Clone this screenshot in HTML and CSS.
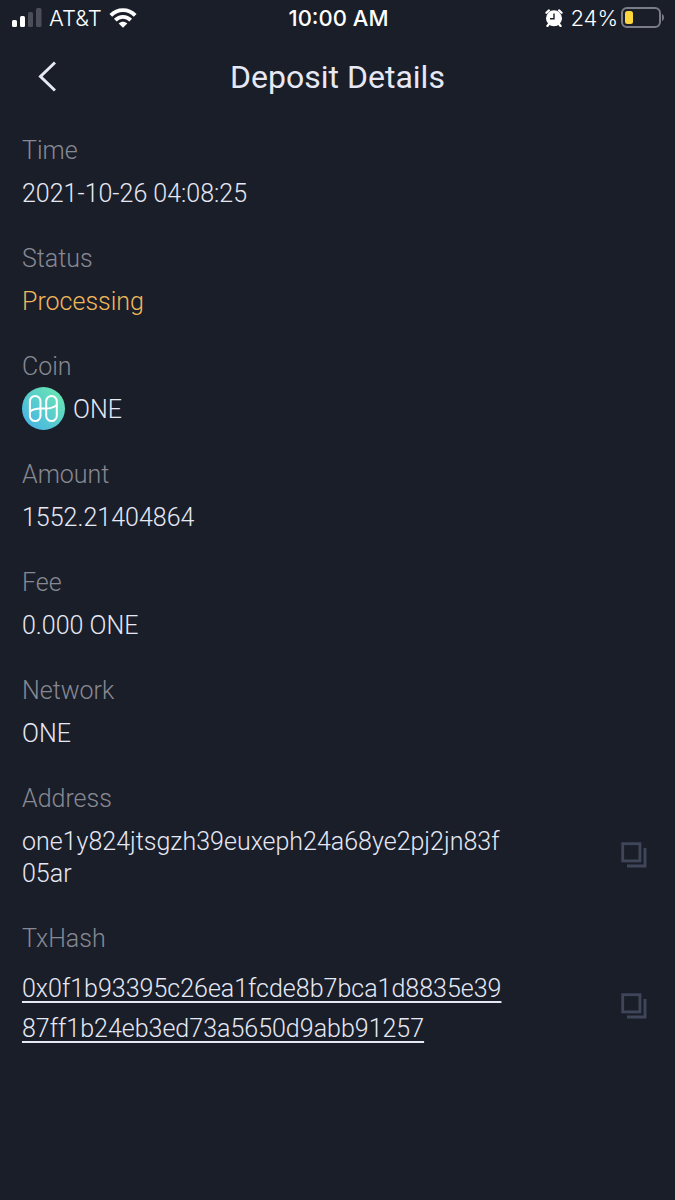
FILE: index.html
```html
<!DOCTYPE html>
<html lang="en">
<head>
    <meta charset="UTF-8">
    <meta name="viewport" content="width=device-width, initial-scale=1.0">
    <title>Deposit Details</title>
    <link rel="stylesheet" href="styles.css">
</head>
<body>
    <!-- Phone status bar -->
    <div class="status-bar">
        <div class="status-left">
            <svg class="signal" width="30" height="20" viewBox="0 0 30 20" fill="#ffffff">
                <rect x="0" y="12" width="5" height="7" rx="1.5"/>
                <rect x="8" y="8" width="5" height="11" rx="1.5"/>
                <rect x="16" y="4" width="5" height="15" rx="1.5" fill="#4b4d57"/>
                <rect x="24" y="0" width="5.5" height="19" rx="1.5" fill="#4b4d57"/>
            </svg>
            <span>AT&amp;T</span>
            <svg class="wifi" width="28" height="20" viewBox="0 0 28 20" fill="none" stroke="#ffffff" stroke-width="3.8">
                <path d="M1.8 7.4C8.6 0.4 19.4 0.4 26.2 7.4"/>
                <path d="M6.3 12.1C10.6 7.8 17.4 7.8 21.7 12.1"/>
                <path d="M14 19.8L9.7 15.5C12.2 13.1 15.8 13.1 18.3 15.5Z" fill="#ffffff" stroke="none"/>
            </svg>
        </div>
        <span class="clock">10:00 AM</span>
        <div class="status-right">
            <svg class="alarm" width="18" height="18" viewBox="0 0 18 18">
                <circle cx="9" cy="9.3" r="8" fill="#ffffff"/>
                <path d="M1.4 3.8L4 1.4M16.6 3.8L14 1.4M4 15L2.4 17M14 15L15.6 17" stroke="#ffffff" stroke-width="2.2" stroke-linecap="round"/>
                <path d="M9 4.6V9.7H5" fill="none" stroke="#1a1e29" stroke-width="1.4"/>
            </svg>
            <span>24%</span>
            <svg class="battery" width="44" height="22" viewBox="0 0 44 22">
                <rect x="1" y="1" width="38" height="19" rx="5" fill="none" stroke="#7b7d86" stroke-width="2"/>
                <rect x="4" y="4" width="8" height="13" rx="2.5" fill="#fdd63c"/>
                <path d="M41 7C43.6 7.6 43.6 13.4 41 14Z" fill="#7b7d86"/>
            </svg>
        </div>
    </div>

    <header class="title-bar">
        <button class="back-btn" type="button" aria-label="Back">
            <svg width="20" height="32" viewBox="0 0 20 32" fill="none" stroke="#e6e8f5" stroke-width="3">
                <path d="M19 1.5L4.5 15.5L19 29.5"/>
            </svg>
        </button>
        <h1>Deposit Details</h1>
    </header>

    <main>
        <dl class="details">
            <div class="field">
                <dt>Time</dt>
                <dd>2021-10-26 04:08:25</dd>
            </div>
            <div class="field">
                <dt>Status</dt>
                <dd class="processing">Processing</dd>
            </div>
            <div class="field">
                <dt>Coin</dt>
                <dd class="coin">
                    <svg width="44" height="46" viewBox="0 0 44 46">
                        <defs>
                            <linearGradient id="coin-fill" x1="0" y1="1" x2="1" y2="0">
                                <stop offset="0.1" stop-color="#48b4e6"/>
                                <stop offset="0.9" stop-color="#69e6b2"/>
                            </linearGradient>
                        </defs>
                        <circle cx="21.5" cy="21.5" r="21.5" fill="url(#coin-fill)"/>
                        <g fill="none" stroke="#ffffff" stroke-width="2">
                            <rect x="7.9" y="9" width="10.6" height="25" rx="5.3"/>
                            <rect x="24.2" y="9" width="10.6" height="25" rx="5.3"/>
                            <path d="M7.9 24.6C11 22.4 14.5 21.6 18.5 21.6H24.2C28.3 21.6 31.5 20.6 34.8 18"/>
                        </g>
                    </svg>
                    <span>ONE</span>
                </dd>
            </div>
            <div class="field">
                <dt>Amount</dt>
                <dd>1552.21404864</dd>
            </div>
            <div class="field">
                <dt>Fee</dt>
                <dd>0.000 ONE</dd>
            </div>
            <div class="field">
                <dt>Network</dt>
                <dd>ONE</dd>
            </div>
            <div class="field">
                <dt>Address</dt>
                <dd class="copyable">
                    <span>one1y824jtsgzh39euxeph24a68ye2pj2jn83f<br>05ar</span>
                    <button class="copy-btn" type="button" aria-label="Copy address">
                        <svg width="26" height="26" viewBox="0 0 26 26" fill="none" stroke="#40465a" stroke-width="2.8">
                            <rect x="1.7" y="1.7" width="17.2" height="17.2"/>
                            <path d="M24 6V24H6"/>
                        </svg>
                    </button>
                </dd>
            </div>
            <div class="field">
                <dt>TxHash</dt>
                <dd class="copyable tx-hash">
                    <a href="#">0x0f1b93395c26ea1fcde8b7bca1d8835e39<br>87ff1b24eb3ed73a5650d9abb91257</a>
                    <button class="copy-btn" type="button" aria-label="Copy transaction hash">
                        <svg width="26" height="26" viewBox="0 0 26 26" fill="none" stroke="#40465a" stroke-width="2.8">
                            <rect x="1.7" y="1.7" width="17.2" height="17.2"/>
                            <path d="M24 6V24H6"/>
                        </svg>
                    </button>
                </dd>
            </div>
        </dl>
    </main>
</body>
</html>
```
FILE: styles.css
```css
* {
    box-sizing: border-box;
}
body {
    font-family: Roboto, "Liberation Sans", sans-serif;
    margin: 0;
    background: #1a1e29;
    color: #e6e8f5;
    font-size: 25px;
    font-weight: 350;
    line-height: 32px;
}
button {
    padding: 0;
    background: none;
    border: none;
    cursor: pointer;
}
svg {
    display: block;
    flex: none;
}

/* Status bar */
.status-bar {
    display: grid;
    grid-template-columns: 1fr auto 1fr;
    align-items: center;
    height: 36px;
    padding: 0 10px 0 12px;
    font-family: Inter, "Liberation Sans", sans-serif;
    font-size: 22px;
    color: #ffffff;
}
.status-left, .status-right {
    display: flex;
    align-items: center;
    gap: 7px;
}
.status-right {
    justify-content: flex-end;
}
.battery {
    margin-left: -4px;
}
.clock {
    font-weight: 500;
}

/* Title bar */
.title-bar {
    display: grid;
    grid-template-columns: 1fr auto 1fr;
    align-items: center;
    height: 81px;
    padding: 0 36px;
}
.back-btn {
    justify-self: start;
}
.title-bar h1 {
    margin: 0;
    font-size: 32px;
    font-weight: 450;
}

/* Detail fields */
.details {
    display: flex;
    flex-direction: column;
    gap: 33px;
    margin: 0;
    padding: 18px 28px 32px 22px;
}
.field {
    display: flex;
    flex-direction: column;
    gap: 11px;
}
dt {
    color: #878992;
}
dd {
    margin: 0;
}
.processing {
    color: #f0b75c;
}
.coin {
    display: flex;
    align-items: center;
    gap: 7px;
    height: 32px;
}
.copyable {
    display: flex;
    align-items: center;
    justify-content: space-between;
}
.copy-btn {
    margin-bottom: 6px;
}
.tx-hash {
    padding-top: 3px;
    line-height: 40px;
}
.tx-hash a {
    color: inherit;
    text-decoration: underline;
    text-decoration-thickness: 2px;
    text-underline-offset: 4px;
    text-decoration-skip-ink: none;
}
```
